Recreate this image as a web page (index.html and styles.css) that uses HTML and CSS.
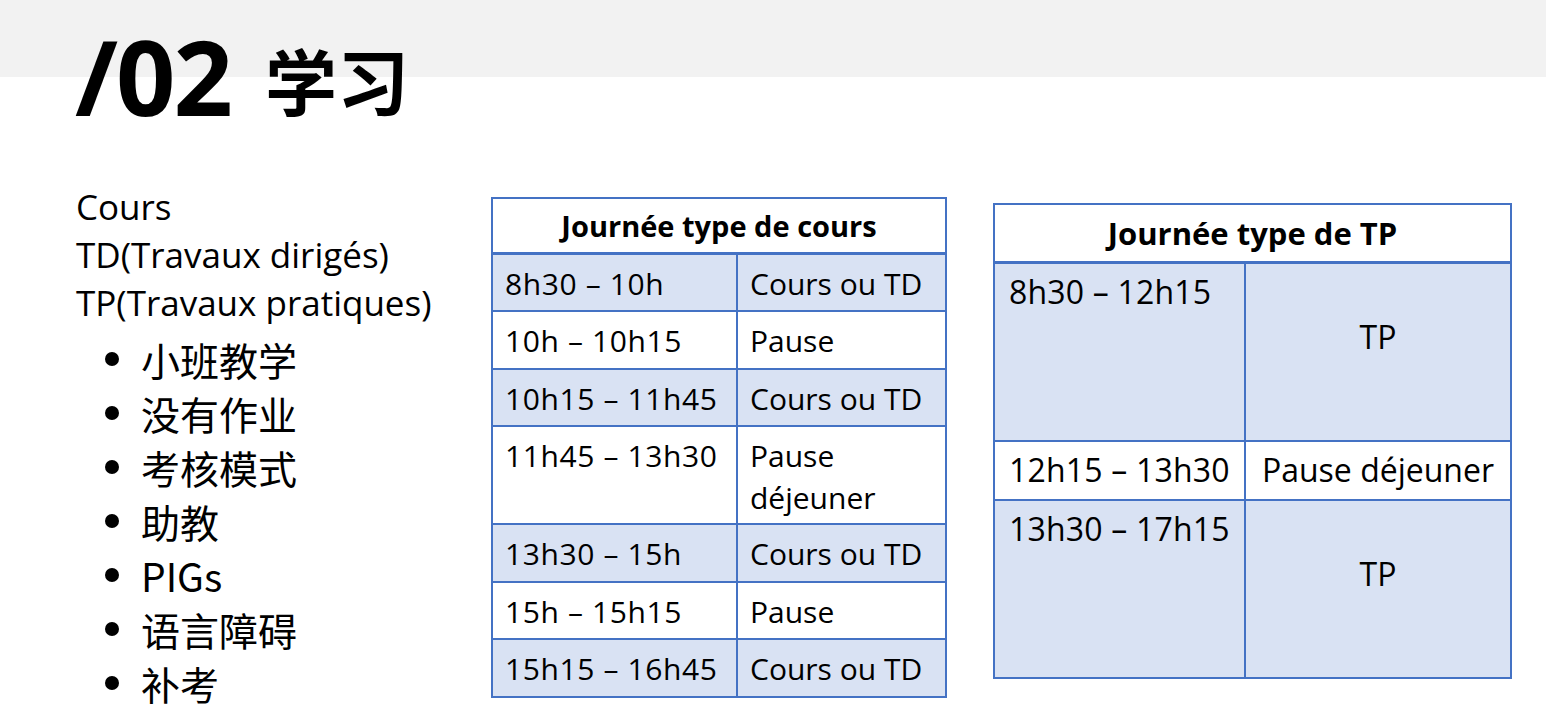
FILE: index.html
```html
<!DOCTYPE html>
<html lang="fr">
<head>
<meta charset="utf-8">
<title>/02 学习</title>
<link rel="stylesheet" href="styles.css">
</head>
<body>
<div class="slide">
  <h1 class="title"><span class="num">/02</span><span class="cn">学习</span></h1>
  <div class="content">
    <div class="left">
      <p class="line">Cours</p>
      <p class="line">TD(Travaux dirigés)</p>
      <p class="line">TP(Travaux pratiques)</p>
      <ul class="bullets">
        <li>小班教学</li>
        <li>没有作业</li>
        <li>考核模式</li>
        <li>助教</li>
        <li>PIGs</li>
        <li>语言障碍</li>
        <li>补考</li>
      </ul>
    </div>
    <table class="tbl tbl-cours">
      <thead>
        <tr><th colspan="2">Journée type de cours</th></tr>
      </thead>
      <tbody>
        <tr class="fill"><td class="c1">8h30 – 10h</td><td class="c2">Cours ou TD</td></tr>
        <tr><td class="c1">10h – 10h15</td><td class="c2">Pause</td></tr>
        <tr class="fill"><td class="c1">10h15 – 11h45</td><td class="c2">Cours ou TD</td></tr>
        <tr class="tall"><td class="c1">11h45 – 13h30</td><td class="c2">Pause déjeuner</td></tr>
        <tr class="fill"><td class="c1">13h30 – 15h</td><td class="c2">Cours ou TD</td></tr>
        <tr><td class="c1">15h – 15h15</td><td class="c2">Pause</td></tr>
        <tr class="fill"><td class="c1">15h15 – 16h45</td><td class="c2">Cours ou TD</td></tr>
      </tbody>
    </table>
    <table class="tbl tbl-tp">
      <thead>
        <tr><th colspan="2">Journée type de TP</th></tr>
      </thead>
      <tbody>
        <tr class="fill big"><td class="c1">8h30 – 12h15</td><td class="c2 mid">TP</td></tr>
        <tr class="small"><td class="c1">12h15 – 13h30</td><td class="c2 center">Pause déjeuner</td></tr>
        <tr class="fill big"><td class="c1">13h30 – 17h15</td><td class="c2 mid">TP</td></tr>
      </tbody>
    </table>
  </div>
</div>
</body>
</html>
```

FILE: styles.css
```css
html, body {
  margin: 0;
  padding: 0;
  background: #ffffff;
}

.slide {
  width: 1546px;
  height: 722px;
  overflow: hidden;
  background: linear-gradient(#f2f2f2 0, #f2f2f2 77px, #ffffff 77px);
  color: #000;
  font-family: "Open Sans", "Noto Sans CJK SC", sans-serif;
}

.title {
  margin: 0;
  padding: 24px 0 0 75px;
  height: 104px;
  line-height: 104px;
  font-weight: 700;
  white-space: nowrap;
}

.title .num {
  font-family: "Open Sans", sans-serif;
  font-size: 104px;
  letter-spacing: -2px;
}

.title .cn {
  font-family: "Noto Sans CJK SC", sans-serif;
  font-size: 72px;
  margin-left: 34px;
  vertical-align: 6px;
}

.content {
  display: flex;
  align-items: flex-start;
  padding: 55px 0 0 76px;
}

.left {
  width: 415px;
  flex: none;
}

.line {
  margin: 0;
  font-size: 35px;
  line-height: 48px;
  white-space: nowrap;
}

.bullets {
  list-style: none;
  margin: 5px 0 0 0;
  padding: 0;
}

.bullets li {
  display: flex;
  align-items: center;
  height: 54px;
  font-family: "Noto Sans CJK SC", "Open Sans", sans-serif;
  font-size: 39px;
  white-space: nowrap;
}

.bullets li::before {
  content: "";
  width: 14px;
  height: 14px;
  border-radius: 50%;
  background: #000;
  margin: 0 22px 0 29px;
  flex: none;
}

.tbl {
  border-collapse: collapse;
  border: 2px solid #4472c4;
  flex: none;
  font-family: "Open Sans", sans-serif;
}

.tbl th {
  font-family: "Open Sans", sans-serif;
  font-weight: 700;
  text-align: center;
  border-bottom: 3px solid #4472c4;
  padding: 0;
  white-space: nowrap;
}

.tbl td {
  border: 2px solid #4472c4;
  vertical-align: top;
  padding: 8px 12px 0 12px;
  line-height: 42px;
}

.tbl td.c1 {
  white-space: nowrap;
}

.tbl tr.fill td {
  background: #d9e2f3;
}

.tbl-cours {
  margin-top: 14px;
  width: 456px;
  font-size: 30px;
}

.tbl-cours th {
  height: 53px;
  font-size: 29px;
}

.tbl-cours tbody tr {
  height: 57.5px;
}

.tbl-cours tbody tr.tall {
  height: 98px;
}

.tbl-cours .c1 {
  width: 219px;
  letter-spacing: 0.6px;
}

.tbl-tp {
  margin-left: 46px;
  margin-top: 20px;
  width: 519px;
  font-size: 32px;
}

.tbl-tp th {
  height: 56px;
  font-size: 31px;
}

.tbl-tp td {
  padding-top: 7px;
  padding-left: 14px;
}

.tbl-tp .c1 {
  width: 223px;
  letter-spacing: 0.2px;
}

.tbl-tp tr.big {
  height: 178px;
}

.tbl-tp tr.small {
  height: 59px;
}

.tbl-tp td.mid {
  vertical-align: middle;
  text-align: center;
  padding: 0 0 30px 0;
}

.tbl-tp td.center {
  text-align: center;
  padding-left: 0;
  padding-right: 0;
  white-space: nowrap;
}

.tbl-tp tr.small td {
  vertical-align: middle;
  padding-top: 0;
}
```
